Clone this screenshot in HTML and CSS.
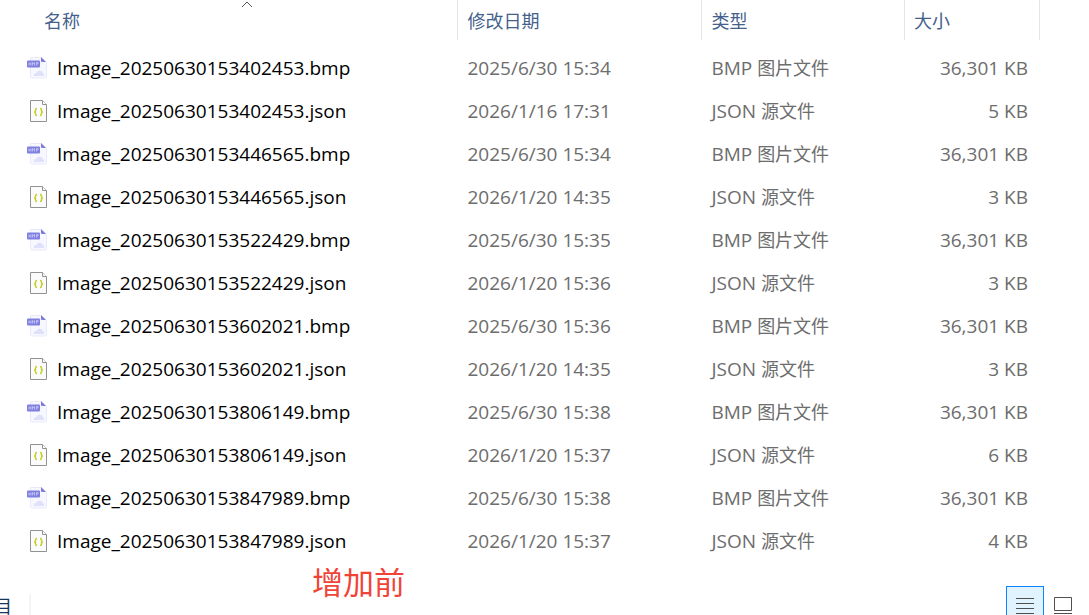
FILE: index.html
```html
<!DOCTYPE html>
<html lang="zh-CN">
<head>
  <meta charset="UTF-8">
  <title>文件列表</title>
  <link rel="stylesheet" href="styles.css">
</head>
<body>

  <svg class="sprite" aria-hidden="true">
    <symbol id="icon-bmp" viewBox="0 0 20 24">
      <path d="M3.500 1.500h11l5 5v14a1.500 1.500 0 0 1-1.500 1.500H5a1.500 1.500 0 0 1-1.500-1.500z" fill="#f7f7ff" stroke="#e9e9fc"/>
      <path d="M14 1l5 5h-4a1 1 0 0 1-1-1z" fill="#7c7ce0"/>
      <path d="M7 20c-1-2 1-3.500 2.500-3 .5-3 5.500-3 6.500 0q2 1 1 3z" fill="#dfe1fb"/>
      <rect x="0" y="4.500" width="13" height="7" rx="1" fill="#8080e0"/>
      <path d="M2 6.500v3M4 6.500v3M2 8h2M5.500 9.500v-3l1 1.500 1-1.500v3M9.500 9.500v-3h1.500v1.500H9.500" fill="none" stroke="#c9c9f3" stroke-width=".8"/>
    </symbol>
    <symbol id="icon-json" viewBox="0 0 20 24">
      <path d="M3.500 1.500h12l4 4v17h-16z" fill="#fbfbfb" stroke="#929292"/>
      <path d="M15.500 1.500v4h4" fill="#fff" stroke="#929292"/>
      <path d="M10 9.500q-1.500 0-1.500 1.500v1q0 1-1.500 1 1.500 0 1.500 1v1q0 1.500 1.500 1.500M13 9.500q1.500 0 1.500 1.500v1q0 1 1.500 1-1.500 0-1.500 1v1q0 1.500-1.500 1.500" fill="none" stroke="#c5cf2a" stroke-width="1.500"/>
    </symbol>
  </svg>

  <table class="files">
    <colgroup>
      <col class="col-name">
      <col class="col-date">
      <col class="col-type">
      <col class="col-size">
      <col>
    </colgroup>
    <thead>
      <tr>
        <th class="sorted">名称
          <svg class="sort-arrow" viewBox="0 0 12 7"><path d="M1 6l5-5 5 5" fill="none" stroke="#555"/></svg>
        </th>
        <th>修改日期</th>
        <th>类型</th>
        <th>大小</th>
        <td></td>
      </tr>
    </thead>
    <tbody id="file-rows"></tbody>
  </table>

  <footer class="footer">
    <p class="note">增加前</p>
    <div class="status">
      <span class="count">目</span>
      <div class="views">
        <button class="view active" aria-label="详细信息">
          <svg width="20" height="20" viewBox="0 0 20 20"><path d="M1 1.500h18M1 6.500h18M1 11.500h18M1 16.500h18" stroke="#505050"/></svg>
        </button>
        <button class="view" aria-label="大图标">
          <svg width="20" height="20" viewBox="0 0 20 20"><path d="M1.500.5h17v13h-17zM1 16.500h18" fill="none" stroke="#505050"/></svg>
        </button>
      </div>
    </div>
  </footer>

  <script>
    const files = [
      ["20250630153402453", "bmp", "2025/6/30 15:34", "36,301 KB"],
      ["20250630153402453", "json", "2026/1/16 17:31", "5 KB"],
      ["20250630153446565", "bmp", "2025/6/30 15:34", "36,301 KB"],
      ["20250630153446565", "json", "2026/1/20 14:35", "3 KB"],
      ["20250630153522429", "bmp", "2025/6/30 15:35", "36,301 KB"],
      ["20250630153522429", "json", "2026/1/20 15:36", "3 KB"],
      ["20250630153602021", "bmp", "2025/6/30 15:36", "36,301 KB"],
      ["20250630153602021", "json", "2026/1/20 14:35", "3 KB"],
      ["20250630153806149", "bmp", "2025/6/30 15:38", "36,301 KB"],
      ["20250630153806149", "json", "2026/1/20 15:37", "6 KB"],
      ["20250630153847989", "bmp", "2025/6/30 15:38", "36,301 KB"],
      ["20250630153847989", "json", "2026/1/20 15:37", "4 KB"]
    ];
    const types = { bmp: "图片文件", json: "源文件" };

    document.getElementById("file-rows").innerHTML = files.map(([id, ext, date, size]) => `
      <tr>
        <td class="name"><div class="file"><svg class="icon"><use href="#icon-${ext}"/></svg>Image_${id}.${ext}</div></td>
        <td>${date}</td>
        <td>${ext.toUpperCase()} <span class="kind">${types[ext]}</span></td>
        <td class="size">${size}</td>
        <td></td>
      </tr>`).join("");
  </script>

</body>
</html>
```

FILE: styles.css
```css
html { overflow: hidden; }
body { margin: 0; background: #fff; color: #6d6d6d; font: 19px/24px "Open Sans", "Noto Sans CJK SC", sans-serif; }
.sprite { display: none; }

.files { width: 100%; table-layout: fixed; border-collapse: separate; border-spacing: 0; white-space: nowrap; }
.col-name { width: 42.1%; }
.col-date { width: 22.4%; }
.col-type { width: 18.6%; }
.col-size { width: 12.4%; }
.files th { height: 40px; padding: 2px 9px 0; border-right: 1px solid #e5e5e5; box-sizing: border-box; color: #43618c; font-size: 18px; font-weight: 400; text-align: left; }
.files .sorted { position: relative; padding-left: 44px; }
.sort-arrow { position: absolute; top: 1px; left: 241px; width: 12px; height: 7px; }
.files tbody::before { content: ""; display: block; height: 6px; }
.files td { padding: 0 9px; }
.files tbody td { height: 43px; }
.files .name { padding: 0 0 0 27px; color: #000; }
.file { display: flex; align-items: center; gap: 10px; }
.icon { width: 20px; height: 24px; }
.kind { font-size: 18px; }
.files .size { padding-right: 12px; text-align: right; }

.footer { position: relative; padding-top: 24px; }
.note { position: absolute; top: 0; left: 312px; margin: 0; color: #f04438; font-size: 31px; line-height: 40px; }
.status { display: flex; justify-content: space-between; padding-right: 7px; }
.count { display: flex; justify-content: flex-end; width: 12px; height: 30px; margin-top: 8px; padding-right: 17px; border-right: 2px solid #f5f5f5; color: #17365d; font-size: 18px; line-height: 24px; }
.views { display: flex; }
.view { display: flex; justify-content: center; width: 38px; height: 38px; padding: 10px 0 0; border: 1px solid transparent; background: none; }
.view.active { border-color: #0a84ff; background: #e0f3ff; }
```
